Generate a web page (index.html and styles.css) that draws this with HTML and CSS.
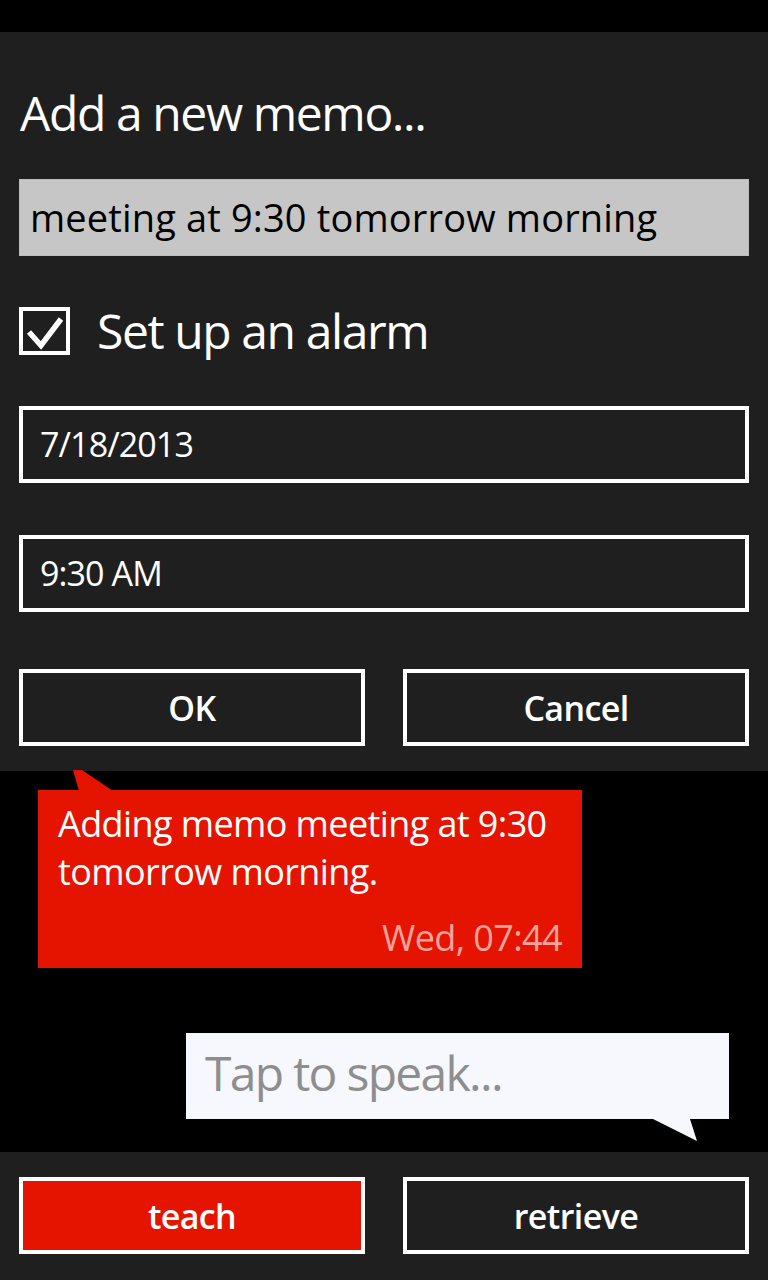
FILE: index.html
```html
<!DOCTYPE html>
<html lang="en">
<head>
<meta charset="utf-8">
<title>Add a new memo</title>
<link rel="stylesheet" href="styles.css">
</head>
<body>
<div class="tray"></div>
<section class="dialog">
  <h1 class="title">Add a new memo...</h1>
  <div class="textbox">meeting at 9:30 tomorrow morning</div>
  <label class="check-row">
    <span class="checkbox">
      <svg viewBox="0 0 43 40" width="43" height="40"><path d="M6 21 L18 34.5 L38 8" fill="none" stroke="#fff" stroke-width="5.5" stroke-linecap="butt" stroke-linejoin="miter"/></svg>
    </span>
    <span class="check-label">Set up an alarm</span>
  </label>
  <div class="picker picker-date">7/18/2013</div>
  <div class="picker picker-time">9:30 AM</div>
  <div class="btn-row">
    <button class="btn">OK</button>
    <button class="btn">Cancel</button>
  </div>
</section>
<section class="chat">
  <div class="bubble bubble-red">
    <p class="bubble-text">Adding memo meeting at 9:30 tomorrow morning.</p>
    <p class="bubble-time">Wed, 07:44</p>
  </div>
  <div class="bubble bubble-input">
    <span class="placeholder">Tap to speak...</span>
  </div>
</section>
<footer class="appbar">
  <button class="btn btn-accent">teach</button>
  <button class="btn">retrieve</button>
</footer>
</body>
</html>
```

FILE: styles.css
```css
* { box-sizing: border-box; }
html, body {
  margin: 0;
  padding: 0;
  background: #000;
  width: 768px;
  height: 1280px;
  overflow: hidden;
  font-family: "Open Sans", "Noto Sans", sans-serif;
  color: #fff;
}
.tray { height: 32px; background: #000; }
.dialog {
  background: #1f1f1f;
  padding: 0 19px 25px 19px;
  display: flex;
  flex-direction: column;
}
.title {
  margin: 57px 0 0 1px;
  font-size: 48px;
  line-height: 48px;
  font-weight: 400;
  letter-spacing: -1.4px;
}
.textbox {
  margin-top: 42px;
  height: 77px;
  background: #c6c6c6;
  border: 1px solid #bdbdbd;
  color: #000;
  font-size: 38px;
  line-height: 75px;
  padding-left: 10px;
  letter-spacing: 0.15px;
}
.check-row {
  margin-top: 51px;
  height: 48px;
  display: flex;
  align-items: center;
}
.checkbox {
  width: 51px;
  height: 48px;
  border: 4px solid #fff;
  display: flex;
  align-items: center;
  justify-content: center;
}
.checkbox svg { display: block; width: 43px; height: 40px; }
.check-label {
  margin-left: 27px;
  font-size: 48px;
  line-height: 48px;
  letter-spacing: -1.4px;
}
.picker {
  height: 77px;
  border: 4px solid #fff;
  font-size: 34px;
  line-height: 69px;
  padding-left: 17px;
  letter-spacing: -0.9px;
}
.picker-date { margin-top: 51px; }
.picker-time { margin-top: 52px; }
.btn-row {
  margin-top: 57px;
  display: flex;
  gap: 38px;
}
.btn {
  flex: 1;
  height: 77px;
  border: 4px solid #fff;
  background: #1f1f1f;
  color: #fff;
  font-family: "Open Sans", "Noto Sans", sans-serif;
  font-size: 34px;
  font-weight: 600;
  letter-spacing: -0.6px;
  padding: 0;
  line-height: 66px;
}
.chat {
  height: 381px;
  display: flex;
  flex-direction: column;
  align-items: flex-start;
}
.bubble { position: relative; }
.bubble-red {
  margin: 19px 0 0 38px;
  width: 544px;
  height: 178px;
  background: #e51400;
  padding: 10px 20px 0 20px;
}
.bubble-red::before {
  content: "";
  position: absolute;
  left: 35px;
  top: -20px;
  width: 40px;
  height: 21px;
  background: #e51400;
  clip-path: polygon(0 0, 9px 0, 40px 100%, 6px 100%);
}
.bubble-text {
  margin: 0;
  font-size: 36px;
  line-height: 48px;
  letter-spacing: -0.6px;
}
.bubble-time {
  margin: 18px 0 0 0;
  text-align: right;
  font-size: 36px;
  line-height: 48px;
  color: #f5a39c;
  letter-spacing: -0.6px;
}
.bubble-input {
  margin: 65px 0 0 186px;
  width: 543px;
  height: 86px;
  background: #f7f8fe;
  padding: 10px 0 0 19px;
}
.bubble-input::after {
  content: "";
  position: absolute;
  left: 467px;
  top: 86px;
  width: 44px;
  height: 22px;
  background: #f7f8fe;
  clip-path: polygon(0 0, 37px 0, 44px 100%);
}
.placeholder {
  font-size: 48px;
  line-height: 60px;
  color: #8e8e8e;
  letter-spacing: -1.7px;
}
.appbar {
  height: 128px;
  background: #1f1f1f;
  padding: 25px 19px 0 19px;
  display: flex;
  gap: 38px;
  align-items: flex-start;
}
.btn-accent { background: #e51400; }
```
